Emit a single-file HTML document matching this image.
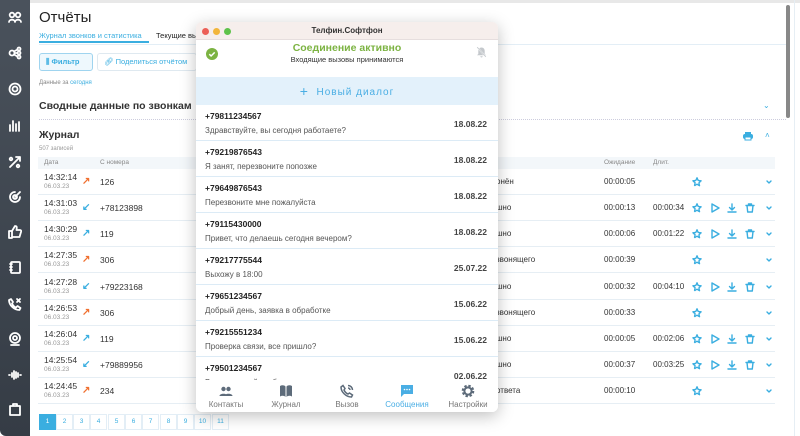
<!DOCTYPE html>
<html><head><meta charset="utf-8"><style>
*{margin:0;padding:0;box-sizing:border-box}
body{width:800px;height:436px;overflow:hidden;background:#fff;font-family:"Liberation Sans",sans-serif;position:relative;color:#222}
.a{position:absolute;white-space:nowrap}
#sb{position:absolute;left:0;top:0;width:30px;height:436px;background:linear-gradient(#4a525c,#353c45);border-radius:0 0 0 6px}
#sb svg{position:absolute;left:8px;width:14px;height:14px;fill:none;stroke:#fff;stroke-width:1.8;stroke-linecap:round;stroke-linejoin:round}
.row{position:absolute;left:38px;width:737px;height:26px;border-bottom:1px solid #e6eef4}
.t{position:absolute;left:6px;top:3px;font-size:8.5px;color:#333}
.d{position:absolute;left:6px;top:14px;font-size:6.5px;color:#999}
.ar{position:absolute;left:44px;top:7px;font-size:10px;font-weight:bold}
.n{position:absolute;left:62px;top:8px;font-size:8.5px;color:#333}
.st{position:absolute;left:458px;top:8px;font-size:8px;color:#333}
.w{position:absolute;left:566px;top:8px;font-size:8px;color:#333}
.du{position:absolute;left:615px;top:8px;font-size:8px;color:#333}
.row svg{position:absolute;top:8px;width:10px;height:10px;fill:none;stroke:#3aaee0;stroke-width:1.4;stroke-linejoin:round;stroke-linecap:round}
.o{color:#f07030}.b{color:#3aaee0}
#pop{position:absolute;left:196px;top:22px;width:302px;height:390px;background:#fff;border-radius:6px;box-shadow:0 4px 16px rgba(0,0,0,.25);overflow:hidden}
.it{position:absolute;left:0;width:302px;height:36px;border-bottom:1.5px solid #dcebf6;background:#fff}
.it b{position:absolute;left:9px;top:6px;font-size:8.5px;color:#222}
.it span{position:absolute;left:9px;top:21px;font-size:8px;color:#555}
.it i{position:absolute;right:11px;top:14px;font-size:8.5px;font-style:normal;color:#444;font-weight:bold}
.nav{position:absolute;font-size:8px;color:#777;text-align:center;width:60px}
.nv{position:absolute;top:4px;width:14px;height:14px}
.pg{position:absolute;top:414px;width:17px;height:16px;border:1px solid #e3eef6;font-size:6.5px;color:#3aaee0;text-align:center;line-height:14px}
</style></head><body>
<div class="a" style="left:0;top:0;width:800px;height:3px;background:#e8e8e8"></div>
<div id="sb">
<svg style="top:10px" viewBox="0 0 14 14"><circle cx="4" cy="5" r="2.3"/><circle cx="10" cy="5" r="2.3"/><path d="M1 12c0-3 6-3 6 0M7 12c0-3 6-3 6 0"/></svg>
<svg style="top:46px" viewBox="0 0 14 14"><circle cx="4" cy="7" r="2.5"/><circle cx="11" cy="3" r="1.5"/><circle cx="11" cy="7" r="1.5"/><circle cx="11" cy="11" r="1.5"/><path d="M6.5 7h3M6 5.5l3.5-2M6 8.5l3.5 2"/></svg>
<svg style="top:82px" viewBox="0 0 14 14"><circle cx="7" cy="7" r="5.5"/><circle cx="7" cy="7" r="2.5"/></svg>
<svg style="top:118px" viewBox="0 0 14 14"><path d="M2 13V7M5 13V3M8 13V6M11 13V4"/></svg>
<svg style="top:155px" viewBox="0 0 14 14"><path d="M2 12L12 2M8 2h4v4"/><circle cx="3" cy="4" r="1.3"/><circle cx="10" cy="11" r="1.3"/></svg>
<svg style="top:190px" viewBox="0 0 14 14"><path d="M12 7A5 5 0 1 1 7 2"/><circle cx="7" cy="7" r="2"/><path d="M7 7l5-5"/></svg>
<svg style="top:225px" viewBox="0 0 14 14"><path d="M1 6h3v7H1zM4 6l3-5c2 0 2 1 1.5 4H12c1 0 1.5 1 1 2l-1.5 5H4"/></svg>
<svg style="top:260px" viewBox="0 0 14 14"><rect x="3" y="2" width="9" height="11" rx="1"/><path d="M2 4h2M2 7h2M2 10h2"/></svg>
<svg style="top:297px" viewBox="0 0 14 14"><path d="M3 2l2 3-1 1.5c1 2 2.5 3.5 4 4L9.5 9l3 2-1 2C6 13 1 8 1 3z"/><path d="M9 2l3 3M12 2l-3 3"/></svg>
<svg style="top:332px" viewBox="0 0 14 14"><circle cx="7" cy="6" r="5"/><circle cx="7" cy="6" r="2"/><path d="M3 13h8"/></svg>
<svg style="top:368px" viewBox="0 0 14 14"><path d="M1 7h1M4 5v4M6 3v8M8 4v6M10 5v4M13 7h-1"/></svg>
<svg style="top:402px" viewBox="0 0 14 14"><path d="M2 4h10v9H2zM5 4V2h4v2"/></svg>
</div>
<div class="a" style="left:786px;top:5px;width:4px;height:113px;background:#888;border-radius:2px"></div>
<div class="a" style="left:794px;top:0;width:1px;height:436px;background:#e6eef4"></div>

<div class="a" style="left:39px;top:9px;font-size:15px;color:#222">Отчёты</div>
<div class="a" style="left:39px;top:31px;font-size:7.5px;color:#3aaee0">Журнал звонков и статистика</div>
<div class="a" style="left:39px;top:41px;width:110px;height:1.5px;background:#3aaee0"></div>
<div class="a" style="left:156px;top:31px;font-size:7.5px;color:#222">Текущие вызовы</div>
<div class="a" style="left:39px;top:44px;width:747px;height:1px;background:#e3eef6"></div>
<div class="a" style="left:39px;top:53px;width:54px;height:18px;border:1px solid #9fd4ef;background:#eef8fd;border-radius:3px;font-size:7.5px;color:#3aaee0;line-height:16px;padding-left:6px;font-weight:bold">⫼ Фильтр</div>
<div class="a" style="left:97px;top:53px;width:100px;height:18px;border:1px solid #dfe9f0;border-radius:3px;font-size:7.5px;color:#3aaee0;line-height:16px;padding-left:6px">🔗︎ Поделиться отчётом</div>
<div class="a" style="left:39px;top:80px;font-size:6px;color:#888">Данные за <span style="color:#3aaee0">сегодня</span></div>
<div class="a" style="left:39px;top:100px;font-size:10.5px;font-weight:bold;color:#333">Сводные данные по звонкам</div>
<div class="a" style="left:763px;top:101px;font-size:8px;color:#3aaee0">⌄</div>
<div class="a" style="left:39px;top:119px;width:747px;border-top:1px dotted #ccd"></div>
<div class="a" style="left:39px;top:129px;font-size:10.5px;font-weight:bold;color:#333">Журнал</div>
<div class="a" style="left:39px;top:146px;font-size:6px;color:#999">507 записей</div>
<svg class="a" style="left:742px;top:131px" width="12" height="10" viewBox="0 0 12 10"><rect x="1" y="3" width="10" height="5" rx="2" fill="#3aaee0"/><rect x="3" y="1" width="6" height="3" fill="#3aaee0"/><rect x="3" y="6" width="6" height="3" fill="#fff" stroke="#3aaee0"/></svg>
<div class="a" style="left:765px;top:131px;font-size:8px;color:#3aaee0">˄</div>
<div class="a" style="left:38px;top:157px;width:737px;height:12px;background:#f3f7fa"></div>
<div class="a" style="left:44px;top:159px;font-size:6.5px;color:#888">Дата</div>
<div class="a" style="left:100px;top:159px;font-size:6.5px;color:#888">С номера</div>
<div class="a" style="left:604px;top:159px;font-size:6.5px;color:#888">Ожидание</div>
<div class="a" style="left:653px;top:159px;font-size:6.5px;color:#888">Длит.</div>

<svg width="0" height="0" style="position:absolute"><defs>
<g id="star"><path d="M5 .8l1.2 2.7 2.9.3-2.2 2 .6 2.9L5 7.2 2.5 8.7l.6-2.9-2.2-2 2.9-.3z" stroke-dasharray="1 .8"/></g>
<g id="play"><path d="M2 1l7 4-7 4z"/></g>
<g id="dl"><path d="M5 1v6M2.5 4.5L5 7l2.5-2.5M1 9h8"/></g>
<g id="tr"><path d="M1 2.5h8M3.5 2.5V1h3v1.5M2 2.5l.7 6.5h4.6L8 2.5"/></g>
<g id="ch"><path d="M3 4l2 2 2-2"/></g>
</defs></svg>

<div class="row" style="top:169px"><div class="t">14:32:14</div><div class="d">06.03.23</div><div class="ar o">↗</div><div class="n">126</div><div class="st">онён</div><div class="w">00:00:05</div><svg style="left:654px" viewBox="0 0 10 10"><use href="#star"/></svg><svg style="left:726px" viewBox="0 0 10 10"><use href="#ch"/></svg></div>
<div class="row" style="top:195px"><div class="t">14:31:03</div><div class="d">06.03.23</div><div class="ar b">↙</div><div class="n">+78123898</div><div class="st">шно</div><div class="w">00:00:13</div><div class="du">00:00:34</div><svg style="left:654px" viewBox="0 0 10 10"><use href="#star"/></svg><svg style="left:672px" viewBox="0 0 10 10"><use href="#play"/></svg><svg style="left:689px" viewBox="0 0 10 10"><use href="#dl"/></svg><svg style="left:707px" viewBox="0 0 10 10"><use href="#tr"/></svg><svg style="left:726px" viewBox="0 0 10 10"><use href="#ch"/></svg></div>
<div class="row" style="top:221px"><div class="t">14:30:29</div><div class="d">06.03.23</div><div class="ar b">↗</div><div class="n">119</div><div class="st">шно</div><div class="w">00:00:06</div><div class="du">00:01:22</div><svg style="left:654px" viewBox="0 0 10 10"><use href="#star"/></svg><svg style="left:672px" viewBox="0 0 10 10"><use href="#play"/></svg><svg style="left:689px" viewBox="0 0 10 10"><use href="#dl"/></svg><svg style="left:707px" viewBox="0 0 10 10"><use href="#tr"/></svg><svg style="left:726px" viewBox="0 0 10 10"><use href="#ch"/></svg></div>
<div class="row" style="top:247px"><div class="t">14:27:35</div><div class="d">06.03.23</div><div class="ar o">↗</div><div class="n">306</div><div class="st">звонящего</div><div class="w">00:00:39</div><svg style="left:654px" viewBox="0 0 10 10"><use href="#star"/></svg><svg style="left:726px" viewBox="0 0 10 10"><use href="#ch"/></svg></div>
<div class="row" style="top:274px"><div class="t">14:27:28</div><div class="d">06.03.23</div><div class="ar b">↙</div><div class="n">+79223168</div><div class="st">шно</div><div class="w">00:00:32</div><div class="du">00:04:10</div><svg style="left:654px" viewBox="0 0 10 10"><use href="#star"/></svg><svg style="left:672px" viewBox="0 0 10 10"><use href="#play"/></svg><svg style="left:689px" viewBox="0 0 10 10"><use href="#dl"/></svg><svg style="left:707px" viewBox="0 0 10 10"><use href="#tr"/></svg><svg style="left:726px" viewBox="0 0 10 10"><use href="#ch"/></svg></div>
<div class="row" style="top:300px"><div class="t">14:26:53</div><div class="d">06.03.23</div><div class="ar o">↗</div><div class="n">306</div><div class="st">звонящего</div><div class="w">00:00:33</div><svg style="left:654px" viewBox="0 0 10 10"><use href="#star"/></svg><svg style="left:726px" viewBox="0 0 10 10"><use href="#ch"/></svg></div>
<div class="row" style="top:326px"><div class="t">14:26:04</div><div class="d">06.03.23</div><div class="ar b">↗</div><div class="n">119</div><div class="st">шно</div><div class="w">00:00:05</div><div class="du">00:02:06</div><svg style="left:654px" viewBox="0 0 10 10"><use href="#star"/></svg><svg style="left:672px" viewBox="0 0 10 10"><use href="#play"/></svg><svg style="left:689px" viewBox="0 0 10 10"><use href="#dl"/></svg><svg style="left:707px" viewBox="0 0 10 10"><use href="#tr"/></svg><svg style="left:726px" viewBox="0 0 10 10"><use href="#ch"/></svg></div>
<div class="row" style="top:352px"><div class="t">14:25:54</div><div class="d">06.03.23</div><div class="ar b">↙</div><div class="n">+79889956</div><div class="st">шно</div><div class="w">00:00:37</div><div class="du">00:03:25</div><svg style="left:654px" viewBox="0 0 10 10"><use href="#star"/></svg><svg style="left:672px" viewBox="0 0 10 10"><use href="#play"/></svg><svg style="left:689px" viewBox="0 0 10 10"><use href="#dl"/></svg><svg style="left:707px" viewBox="0 0 10 10"><use href="#tr"/></svg><svg style="left:726px" viewBox="0 0 10 10"><use href="#ch"/></svg></div>
<div class="row" style="top:378px"><div class="t">14:24:45</div><div class="d">06.03.23</div><div class="ar o">↗</div><div class="n">234</div><div class="st">ответа</div><div class="w">00:00:10</div><svg style="left:654px" viewBox="0 0 10 10"><use href="#star"/></svg><svg style="left:726px" viewBox="0 0 10 10"><use href="#ch"/></svg></div>

<div class="pg" style="left:39px;background:#3aaee0;color:#fff;border-color:#3aaee0">1</div>
<div class="pg" style="left:56px">2</div><div class="pg" style="left:73px">3</div><div class="pg" style="left:90px">4</div><div class="pg" style="left:108px">5</div><div class="pg" style="left:125px">6</div><div class="pg" style="left:142px">7</div><div class="pg" style="left:160px">8</div><div class="pg" style="left:177px">9</div><div class="pg" style="left:194px">10</div><div class="pg" style="left:212px">11</div>

<div id="pop">
<div class="a" style="left:0;top:0;width:302px;height:18px;background:#f6eeec;border-bottom:1px solid #e6dede"></div>
<div class="a" style="left:6px;top:6px;width:7px;height:7px;border-radius:50%;background:#ec5f57"></div>
<div class="a" style="left:17px;top:6px;width:7px;height:7px;border-radius:50%;background:#f2b53b"></div>
<div class="a" style="left:28px;top:6px;width:7px;height:7px;border-radius:50%;background:#5ec24a"></div>
<div class="a" style="left:0;top:4px;width:302px;text-align:center;font-size:8px;font-weight:bold;color:#333">Телфин.Софтфон</div>
<svg class="a" style="left:10px;top:26px" width="12" height="12" viewBox="0 0 12 12"><circle cx="6" cy="6" r="6" fill="#7cb342"/><path d="M3.3 6.2l1.8 1.8 3.6-3.6" stroke="#fff" stroke-width="1.5" fill="none"/></svg>
<div class="a" style="left:0;top:20px;width:302px;text-align:center;font-size:10.5px;font-weight:bold;color:#7cb342">Соединение активно</div>
<div class="a" style="left:0;top:33px;width:302px;text-align:center;font-size:7.5px;color:#333">Входящие вызовы принимаются</div>
<svg class="a" style="left:280px;top:24px" width="11" height="12" viewBox="0 0 11 12"><path d="M5.5 1.5c-2 0-3.2 1.5-3.2 3.5v3L1 9.3h9L8.7 8V5c0-2-1.2-3.5-3.2-3.5zM4.3 10.3a1.2 1.2 0 0 0 2.4 0" fill="#c4c8cc"/><path d="M1 1l9 10" stroke="#fff" stroke-width="1.5"/><path d="M1.2 1.2l8.6 9.6" stroke="#c4c8cc" stroke-width=".8"/></svg>
<div class="a" style="left:0;top:55px;width:302px;height:28px;background:#e3f1fb;text-align:center;font-size:10px;color:#4aaee4;line-height:28px;letter-spacing:1px"><span style="font-size:14px;vertical-align:-1px">+</span>&nbsp; Новый диалог</div>
<div class="it" style="top:83px"><b>+79811234567</b><span>Здравствуйте, вы сегодня работаете?</span><i>18.08.22</i></div>
<div class="it" style="top:119px"><b>+79219876543</b><span>Я занят, перезвоните попозже</span><i>18.08.22</i></div>
<div class="it" style="top:155px"><b>+79649876543</b><span>Перезвоните мне пожалуйста</span><i>18.08.22</i></div>
<div class="it" style="top:191px"><b>+79115430000</b><span>Привет, что делаешь сегодня вечером?</span><i>18.08.22</i></div>
<div class="it" style="top:227px"><b>+79217775544</b><span>Выхожу в 18:00</span><i>25.07.22</i></div>
<div class="it" style="top:263px"><b>+79651234567</b><span>Добрый день, заявка в обработке</span><i>15.06.22</i></div>
<div class="it" style="top:299px"><b>+79215551234</b><span>Проверка связи, все пришло?</span><i>15.06.22</i></div>
<div class="it" style="top:335px"><b>+79501234567</b><span>Ваши настройки обновлены</span><i>02.06.22</i></div>
<div class="a" style="left:0;top:358px;width:302px;height:32px;background:#fff">
<svg class="nv" style="left:23px" viewBox="0 0 14 14" fill="#5d6b7a"><circle cx="4.5" cy="5" r="2.2"/><circle cx="9.5" cy="5" r="2.2"/><path d="M0.5 12c0-3 8-3 8 0zM5.5 12c0-3 8-3 8 0z"/></svg>
<svg class="nv" style="left:83px" viewBox="0 0 14 14" fill="#5d6b7a"><path d="M1 2c2-1 4-1 5.5 0.5V13C5 11.5 3 11.5 1 12.5zM13 2c-2-1-4-1-5.5 0.5V13C9 11.5 11 11.5 13 12.5z"/></svg>
<svg class="nv" style="left:144px" viewBox="0 0 14 14" fill="none" stroke="#5d6b7a" stroke-width="1.5"><path d="M3 1.5l2 3-1 1.5c1 2 2.5 3.5 4 4L9.5 9l3 2-1 2C6 13 1 8 1 3z"/><path d="M8 1.5a4.5 4.5 0 0 1 4.5 4.5M8 4a2 2 0 0 1 2 2"/></svg>
<svg class="nv" style="left:204px" viewBox="0 0 14 14"><path d="M1 1h12v9H4l-3 3z" fill="#4aaee4"/><circle cx="4.5" cy="5.5" r=".8" fill="#fff"/><circle cx="7" cy="5.5" r=".8" fill="#fff"/><circle cx="9.5" cy="5.5" r=".8" fill="#fff"/></svg>
<svg class="nv" style="left:265px" viewBox="0 0 14 14"><circle cx="7" cy="7" r="4.8" fill="none" stroke="#5d6b7a" stroke-width="3" stroke-dasharray="2.2 1.6"/><circle cx="7" cy="7" r="3.6" fill="none" stroke="#5d6b7a" stroke-width="2"/></svg>
<div class="nav" style="left:0;top:20px">Контакты</div>
<div class="nav" style="left:60px;top:20px">Журнал</div>
<div class="nav" style="left:121px;top:20px">Вызов</div>
<div class="nav" style="left:181px;top:20px;color:#4aaee4">Сообщения</div>
<div class="nav" style="left:242px;top:20px">Настройки</div>
</div>
</div>
</body></html>
